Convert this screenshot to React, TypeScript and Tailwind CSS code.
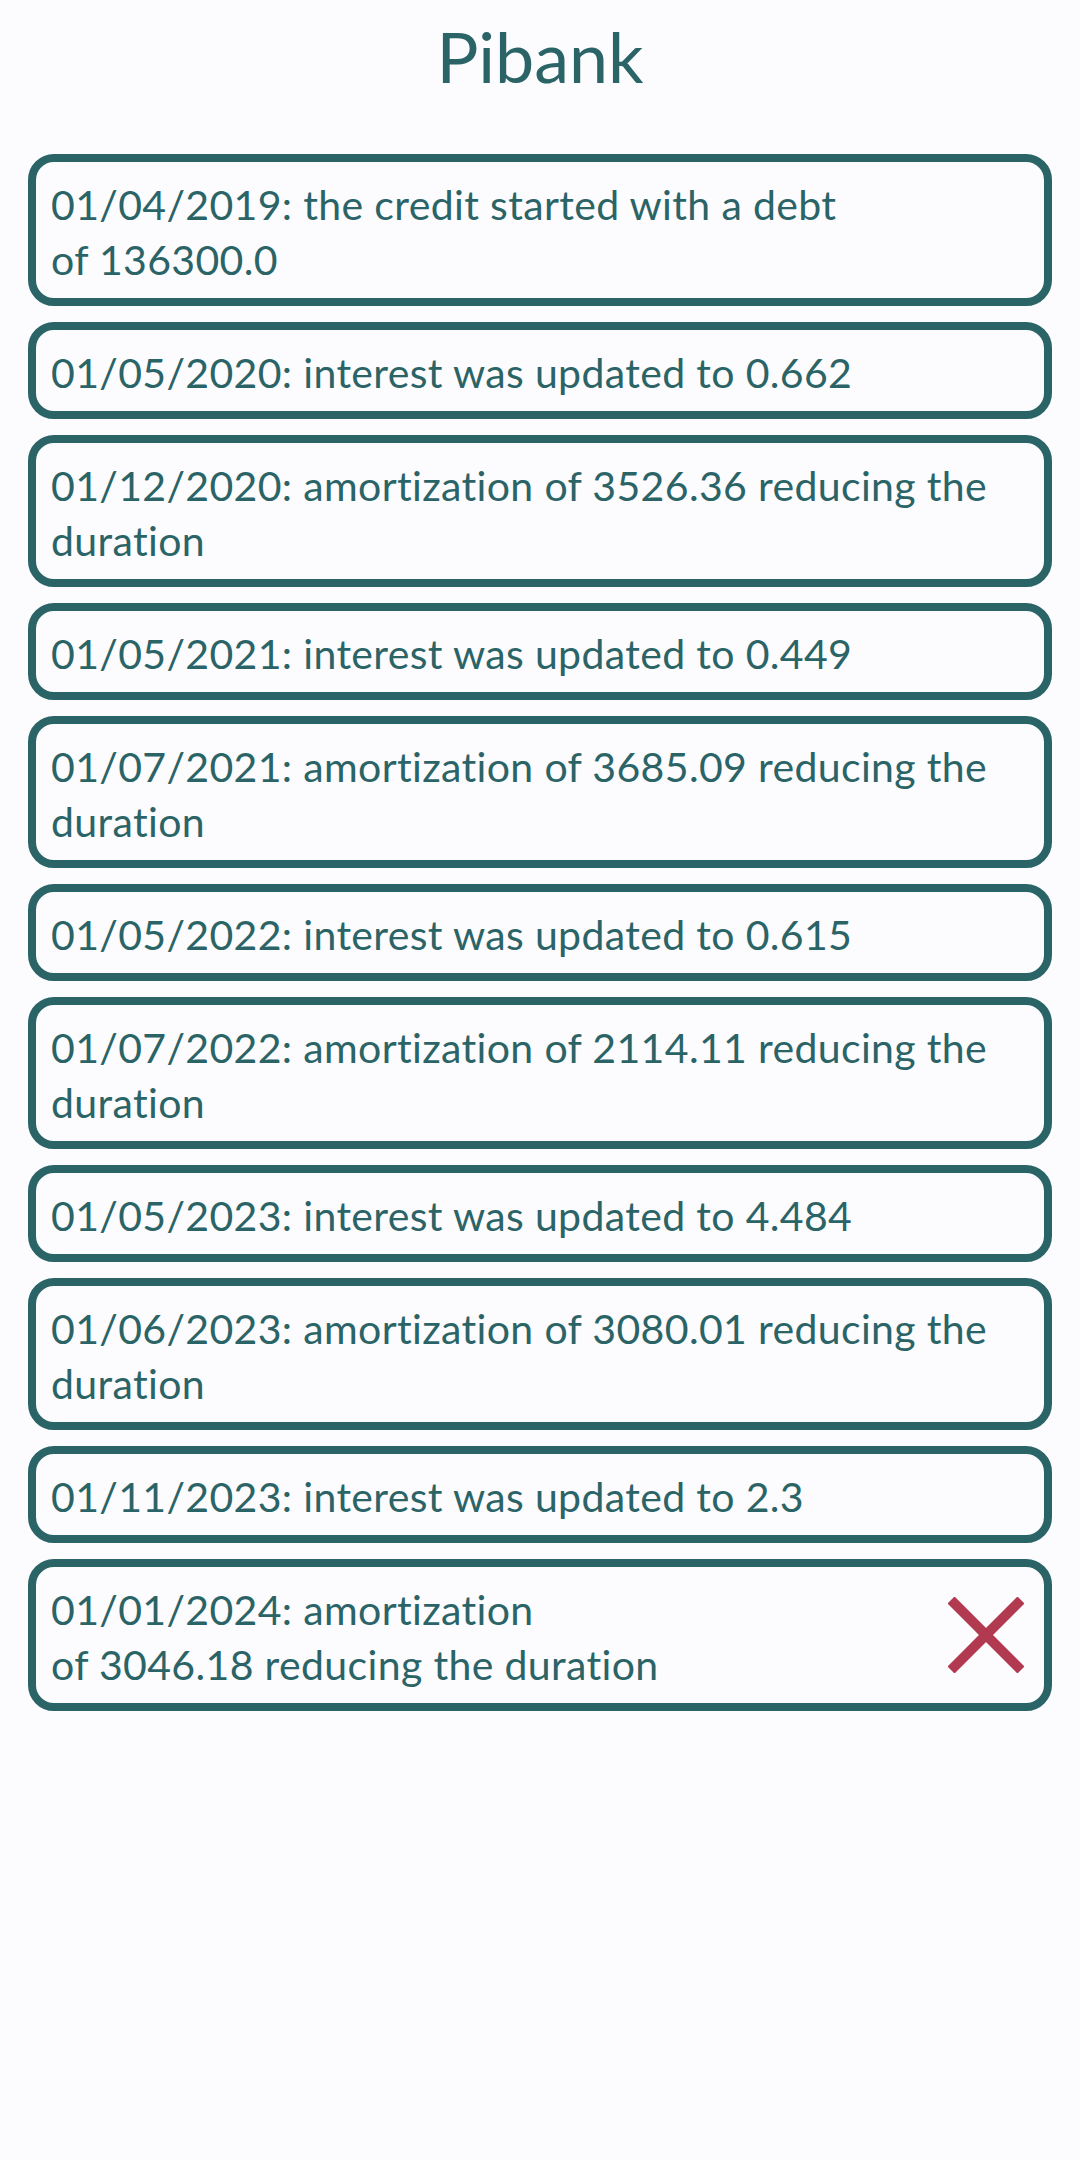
import React from "react";

const items: { text: React.ReactNode; x?: boolean }[] = [
  { text: <>01/04/2019: the credit started with a debt<br />of 136300.0</> },
  { text: "01/05/2020: interest was updated to 0.662" },
  { text: "01/12/2020: amortization of 3526.36 reducing the duration" },
  { text: "01/05/2021: interest was updated to 0.449" },
  { text: "01/07/2021: amortization of 3685.09 reducing the duration" },
  { text: "01/05/2022: interest was updated to 0.615" },
  { text: "01/07/2022: amortization of 2114.11 reducing the duration" },
  { text: "01/05/2023: interest was updated to 4.484" },
  { text: "01/06/2023: amortization of 3080.01 reducing the duration" },
  { text: "01/11/2023: interest was updated to 2.3" },
  { text: <>01/01/2024: amortization<br />of 3046.18 reducing the duration</>, x: true },
];

export default function App() {
  return (
    <div
      className="min-h-[2160px] w-full bg-[#fcfbfd] text-[#2b6467]"
      style={{ fontFamily: "Lato, 'Noto Sans', sans-serif" }}
    >
      <div className="flex h-[154px] justify-center pt-[17px]">
        <h1 className="text-[70px] leading-[78px]">Pibank</h1>
      </div>
      <div className="flex flex-col gap-[16px] px-[28px]">
        {items.map((it, i) => (
          <div
            key={i}
            className="flex items-center rounded-[26px] border-[8px] border-[#2b6467] pt-[15px] pb-[11px] pl-[15px] pr-[20px]"
          >
            <div className="flex-1 text-[41px] leading-[55px] tracking-[0.35px]">{it.text}</div>
            {it.x && (
              <svg width="76" height="76" viewBox="0 0 76 76" className="shrink-0 -mt-[4px]">
                <line x1="3" y1="3" x2="73" y2="73" stroke="#b23a50" strokeWidth="10" />
                <line x1="73" y1="3" x2="3" y2="73" stroke="#b23a50" strokeWidth="10" />
              </svg>
            )}
          </div>
        ))}
      </div>
    </div>
  );
}
